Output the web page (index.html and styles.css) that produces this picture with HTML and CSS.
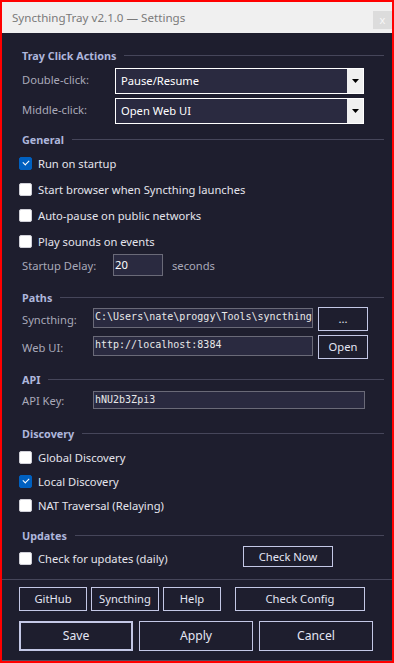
FILE: index.html
```html
<!DOCTYPE html>
<html lang="en">
<head>
  <meta charset="UTF-8">
  <title>SyncthingTray v2.1.0 — Settings</title>
  <link rel="stylesheet" href="styles.css">
</head>
<body>

  <div class="window">
    <div class="titlebar">
      <span class="title">SyncthingTray v2.1.0 — Settings</span>
      <span class="close">x</span>
    </div>

    <div class="content">
      <div class="section head-tray"><span>Tray Click Actions</span><i></i></div>
      <div class="row combo-row">
        <label>Double-click:</label>
        <div class="combo"><span>Pause/Resume</span><b><svg width="7" height="4" viewBox="0 0 7 4"><path d="M0 0h7L3.5 4z" fill="#000"/></svg></b></div>
      </div>
      <div class="row combo-row second">
        <label>Middle-click:</label>
        <div class="combo"><span>Open Web UI</span><b><svg width="7" height="4" viewBox="0 0 7 4"><path d="M0 0h7L3.5 4z" fill="#000"/></svg></b></div>
      </div>

      <div class="section head-general"><span>General</span><i></i></div>
      <div class="check first"><span class="box on"></span>Run on startup</div>
      <div class="check"><span class="box"></span>Start browser when Syncthing launches</div>
      <div class="check"><span class="box"></span>Auto-pause on public networks</div>
      <div class="check"><span class="box"></span>Play sounds on events</div>
      <div class="row delay-row">
        <label>Startup Delay:</label>
        <div class="spin">20</div>
        <span class="unit">seconds</span>
      </div>

      <div class="section head-paths"><span>Paths</span><i></i></div>
      <div class="row path-row first">
        <label>Syncthing:</label>
        <div class="field">C:\Users\nate\proggy\Tools\syncthing</div>
        <button class="btn small">...</button>
      </div>
      <div class="row path-row">
        <label>Web UI:</label>
        <div class="field">http://localhost:8384</div>
        <button class="btn small">Open</button>
      </div>

      <div class="section head-api"><span>API</span><i></i></div>
      <div class="row api-row">
        <label>API Key:</label>
        <div class="field wide">hNU2b3Zpi3</div>
      </div>

      <div class="section head-disc"><span>Discovery</span><i></i></div>
      <div class="check tight first"><span class="box"></span>Global Discovery</div>
      <div class="check tight"><span class="box on"></span>Local Discovery</div>
      <div class="check tight"><span class="box"></span>NAT Traversal (Relaying)</div>

      <div class="section head-upd"><span>Updates</span><i></i></div>
      <div class="row upd-row">
        <div class="check tight"><span class="box"></span>Check for updates (daily)</div>
        <button class="btn now">Check Now</button>
      </div>
    </div>

    <div class="footer">
      <div class="links">
        <button class="btn link gh">GitHub</button>
        <button class="btn link st">Syncthing</button>
        <button class="btn link hp">Help</button>
        <button class="btn link cfg">Check Config</button>
      </div>
      <div class="actions">
        <button class="btn big default">Save</button>
        <button class="btn big">Apply</button>
        <button class="btn big">Cancel</button>
      </div>
    </div>
  </div>

</body>
</html>
```

FILE: styles.css
```css
* {
  box-sizing: border-box;
}

body {
  margin: 0;
  font-family: "Noto Sans", sans-serif;
  font-size: 11.2px;
}

.window {
  width: 394px;
  height: 663px;
  border: 2px solid #ff0000;
  background-color: #1e1e2e;
  display: flex;
  flex-direction: column;
  overflow: hidden;
}

.titlebar {
  height: 31px;
  background-color: #f0f0f0;
  display: flex;
  justify-content: space-between;
  flex-shrink: 0;
}

.title {
  color: #7a7a7a;
  font-size: 11.6px;
  padding-left: 10px;
  line-height: 32px;
}

.close {
  width: 19px;
  height: 18px;
  margin-top: 9px;
  background-color: #dcdcdc;
  color: #f8f8f8;
  font-size: 11px;
  text-align: center;
  line-height: 17px;
}

.content {
  padding: 14px 8px 0 18px;
  flex: 1;
}

.section {
  display: flex;
  align-items: center;
  height: 16px;
  padding-left: 2px;
  color: #aeb6dc;
  font-weight: 700;
  font-size: 10.8px;
}

.section i {
  flex: 1;
  height: 1px;
  background-color: #46465a;
  margin-left: 8px;
}

.head-general { margin-top: 7px; }
.head-paths { margin-top: 13px; }
.head-api { margin-top: 12px; }
.head-disc { margin-top: 15px; }
.head-upd { margin-top: 10px; }

.row {
  display: flex;
  align-items: center;
}

label {
  color: #a9a9b9;
  padding-left: 2px;
}

.combo-row {
  height: 26px;
  margin-top: 5px;
}

.combo-row.second {
  margin-top: 4px;
}

.combo-row label {
  width: 95px;
  align-self: flex-start;
  padding-top: 4px;
}

.combo {
  width: 249px;
  height: 26px;
  border: 1px solid #ffffff;
  background-color: #2a2a40;
  display: flex;
  color: #ffffff;
}

.combo span {
  flex: 1;
  padding-left: 5px;
  line-height: 24px;
}

.combo b {
  width: 16px;
  background-color: #f0f0f0;
  display: flex;
  align-items: center;
  justify-content: center;
}

.check {
  display: flex;
  align-items: center;
  height: 26px;
  color: #e4e4ec;
  margin-left: -1px;
}

.check.first {
  margin-top: 3px;
}

.check.tight {
  height: 24px;
}

.check.tight.first {
  margin-top: 4px;
}

.box {
  width: 13px;
  height: 13px;
  border-radius: 2px;
  background-color: #ffffff;
  border: 1px solid #d0d0d8;
  margin-right: 6px;
  flex-shrink: 0;
}

.box.on {
  background-color: #0060c0;
  border-color: #0060c0;
  position: relative;
}

.box.on::after {
  content: "";
  position: absolute;
  left: 3px;
  top: 2px;
  width: 5px;
  height: 3px;
  border-left: 1px solid #ffffff;
  border-bottom: 1px solid #ffffff;
  transform: rotate(-45deg);
}

.delay-row {
  height: 22px;
}

.delay-row label {
  width: 93px;
}

.spin {
  width: 50px;
  height: 22px;
  border: 1px solid #6a6a78;
  background-color: #2a2a40;
  color: #ffffff;
  padding-left: 1px;
  line-height: 19px;
}

.unit {
  color: #a9a9b9;
  margin-left: 9px;
}

.path-row {
  height: 24px;
  margin-top: 4px;
}

.path-row.first {
  margin-top: 2px;
}

.path-row label,
.api-row label {
  width: 73px;
}

.field {
  width: 220px;
  height: 20px;
  border: 1px solid #6a6a78;
  background-color: #2a2a40;
  color: #e8e8e8;
  font-family: "DejaVu Sans Mono", monospace;
  font-size: 10px;
  padding-left: 1px;
  line-height: 16px;
  white-space: nowrap;
  overflow: hidden;
  align-self: flex-start;
  margin-top: 1px;
}

.field.wide {
  width: 272px;
  height: 18px;
  margin-top: 0;
  align-self: center;
  line-height: 15px;
}

.api-row {
  height: 20px;
  margin-top: 3px;
}

.btn {
  font-family: "Noto Sans", sans-serif;
  font-size: 11.2px;
  color: #e4e6f4;
  background-color: #1e1e2e;
  border: 1px solid #c4c8e6;
  padding: 0;
  line-height: 1;
}

.btn.small {
  width: 50px;
  height: 24px;
  margin-left: 5px;
}

.upd-row {
  height: 24px;
  margin-top: 3px;
}

.upd-row .check {
  width: 224px;
}

.btn.now {
  width: 90px;
  height: 21px;
  align-self: flex-start;
}

.footer {
  border-top: 1px solid #46465a;
  margin-top: 8px;
  padding: 7px 0 9px 17px;
  border-bottom: 1px solid #505060;
}

.links {
  display: flex;
  height: 24px;
}

.btn.link {
  height: 24px;
  margin-right: 4px;
}

.btn.gh { width: 68px; }
.btn.st { width: 68px; }
.btn.hp { width: 58px; margin-right: 14px; }
.btn.cfg { width: 130px; }

.actions {
  display: flex;
  gap: 6px;
  margin-top: 10px;
}

.btn.big {
  width: 114px;
  height: 30px;
  font-size: 12.2px;
}

.btn.default {
  border: 2px solid #c4c8e6;
}
```
